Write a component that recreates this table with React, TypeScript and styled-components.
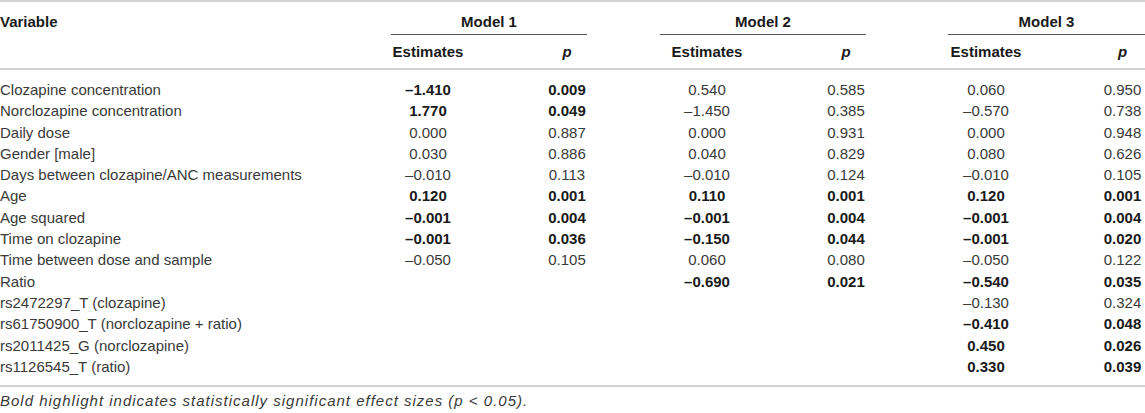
import { createGlobalStyle } from 'styled-components';
import styled from 'styled-components';

type Cell = { est: string; p: string; bold?: boolean } | null;

type Row = {
	label: string;
	models: [Cell, Cell, Cell];
};

const rows: Row[] = [
	{
		label: 'Clozapine concentration',
		models: [
			{ est: '–1.410', p: '0.009', bold: true },
			{ est: '0.540', p: '0.585' },
			{ est: '0.060', p: '0.950' },
		],
	},
	{
		label: 'Norclozapine concentration',
		models: [
			{ est: '1.770', p: '0.049', bold: true },
			{ est: '–1.450', p: '0.385' },
			{ est: '–0.570', p: '0.738' },
		],
	},
	{
		label: 'Daily dose',
		models: [
			{ est: '0.000', p: '0.887' },
			{ est: '0.000', p: '0.931' },
			{ est: '0.000', p: '0.948' },
		],
	},
	{
		label: 'Gender [male]',
		models: [
			{ est: '0.030', p: '0.886' },
			{ est: '0.040', p: '0.829' },
			{ est: '0.080', p: '0.626' },
		],
	},
	{
		label: 'Days between clozapine/ANC measurements',
		models: [
			{ est: '–0.010', p: '0.113' },
			{ est: '–0.010', p: '0.124' },
			{ est: '–0.010', p: '0.105' },
		],
	},
	{
		label: 'Age',
		models: [
			{ est: '0.120', p: '0.001', bold: true },
			{ est: '0.110', p: '0.001', bold: true },
			{ est: '0.120', p: '0.001', bold: true },
		],
	},
	{
		label: 'Age squared',
		models: [
			{ est: '–0.001', p: '0.004', bold: true },
			{ est: '–0.001', p: '0.004', bold: true },
			{ est: '–0.001', p: '0.004', bold: true },
		],
	},
	{
		label: 'Time on clozapine',
		models: [
			{ est: '–0.001', p: '0.036', bold: true },
			{ est: '–0.150', p: '0.044', bold: true },
			{ est: '–0.001', p: '0.020', bold: true },
		],
	},
	{
		label: 'Time between dose and sample',
		models: [
			{ est: '–0.050', p: '0.105' },
			{ est: '0.060', p: '0.080' },
			{ est: '–0.050', p: '0.122' },
		],
	},
	{
		label: 'Ratio',
		models: [
			null,
			{ est: '–0.690', p: '0.021', bold: true },
			{ est: '–0.540', p: '0.035', bold: true },
		],
	},
	{
		label: 'rs2472297_T (clozapine)',
		models: [null, null, { est: '–0.130', p: '0.324' }],
	},
	{
		label: 'rs61750900_T (norclozapine + ratio)',
		models: [null, null, { est: '–0.410', p: '0.048', bold: true }],
	},
	{
		label: 'rs2011425_G (norclozapine)',
		models: [null, null, { est: '0.450', p: '0.026', bold: true }],
	},
	{
		label: 'rs1126545_T (ratio)',
		models: [null, null, { est: '0.330', p: '0.039', bold: true }],
	},
];

// first column of each model group in the grid
const modelStart = [2, 6, 10];

export default function App() {
	return (
		<>
			<GlobalStyle />
			<Table>
				<Head>
					<GroupRow>
						<HeadCell $col={1} $align="left">
							Variable
						</HeadCell>
						{modelStart.map((start, i) => (
							<ModelTitle key={start} $col={start}>
								Model {i + 1}
							</ModelTitle>
						))}
					</GroupRow>
					<SubRow>
						{modelStart.map((start) => (
							<>
								<HeadCell key={`e${start}`} $col={start}>
									Estimates
								</HeadCell>
								<HeadCell key={`p${start}`} $col={start + 2}>
									<em>p</em>
								</HeadCell>
							</>
						))}
					</SubRow>
				</Head>
				<Body>
					{rows.map((row) => (
						<BodyRow key={row.label}>
							<Cell $col={1} $align="left">
								{row.label}
							</Cell>
							{row.models.map((m, i) =>
								m ? (
									<>
										<Cell key={`e${i}`} $col={modelStart[i]} $bold={m.bold}>
											{m.est}
										</Cell>
										<Cell key={`p${i}`} $col={modelStart[i] + 2} $bold={m.bold}>
											{m.p}
										</Cell>
									</>
								) : null,
							)}
						</BodyRow>
					))}
				</Body>
			</Table>
			<Footnote>
				Bold highlight indicates statistically significant effect sizes (p &lt; 0.05).
			</Footnote>
		</>
	);
}

const GlobalStyle = createGlobalStyle`
	html, body {
		margin: 0;
		padding: 0;
		background: #fff;
	}
	body {
		font-family: "Liberation Sans", Arial, Helvetica, sans-serif;
		font-size: 15px;
		color: #3a3a3a;
	}
`;

const columns =
	'391px 74px 82px 40px 73px 94px 72px 40px 82px 76px 76px 45px';

const Table = styled.div`
	width: 1145px;
	border-top: 2px solid #d2d2d2;
	border-bottom: 2px solid #d2d2d2;
`;

const Head = styled.div`
	border-bottom: 2px solid #d2d2d2;
`;

const GroupRow = styled.div`
	display: grid;
	grid-template-columns: ${columns};
	padding-top: 11px;
	line-height: 18px;
`;

const SubRow = styled.div`
	display: grid;
	grid-template-columns: ${columns};
	padding: 8px 0 7px;
	line-height: 18px;
`;

const HeadCell = styled.div<{ $col: number; $align?: 'left' | 'center' }>`
	grid-column: ${(p) => p.$col};
	text-align: ${(p) => p.$align ?? 'center'};
	font-weight: 700;
	color: #1a1a1a;
	white-space: nowrap;

	em {
		font-style: italic;
	}
`;

const ModelTitle = styled.div<{ $col: number }>`
	grid-column: ${(p) => p.$col} / span 3;
	text-align: center;
	font-weight: 700;
	color: #1a1a1a;
	padding-bottom: 3px;
	border-bottom: 1px solid #555;
`;

const Body = styled.div`
	padding: 9px 0 8px;
`;

const BodyRow = styled.div`
	display: grid;
	grid-template-columns: ${columns};
	height: 21.3px;
	line-height: 21.3px;
`;

const Cell = styled.div<{ $col: number; $align?: 'left' | 'center'; $bold?: boolean }>`
	grid-column: ${(p) => p.$col};
	text-align: ${(p) => p.$align ?? 'center'};
	font-weight: ${(p) => (p.$bold ? 700 : 400)};
	color: ${(p) => (p.$bold ? '#1a1a1a' : '#3a3a3a')};
	white-space: nowrap;
`;

const Footnote = styled.p`
	margin: 0;
	padding-top: 5px;
	line-height: 18px;
	font-style: italic;
	letter-spacing: 1px;
	color: #3a3a3a;
`;
